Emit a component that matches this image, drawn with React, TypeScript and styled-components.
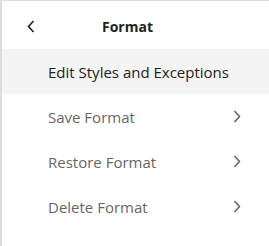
import * as React from "react";
import styled, { createGlobalStyle } from "styled-components";

const GlobalStyle = createGlobalStyle`
  html, body {
    margin: 0;
    padding: 0;
    background: #ffffff;
  }
  body {
    font-family: "Open Sans", "Noto Sans", sans-serif;
  }
`;

const items = [
  { label: "Edit Styles and Exceptions", active: true, sub: false },
  { label: "Save Format", active: false, sub: true },
  { label: "Restore Format", active: false, sub: true },
  { label: "Delete Format", active: false, sub: true },
];

const Chevron = ({ dir, color }: { dir: "left" | "right"; color: string }) => (
  <svg width="8" height="13" viewBox="0 0 8 13">
    <path
      d={dir === "left" ? "M6.5 1 L1.5 6.5 L6.5 12" : "M1.5 1 L6.5 6.5 L1.5 12"}
      fill="none"
      stroke={color}
      strokeWidth="1.6"
    />
  </svg>
);

const App = () => {
  return (
    <>
      <GlobalStyle />
      <Panel>
        <Header>
          <BackButton>
            <Chevron dir="left" color="#222" />
          </BackButton>
          <Title>Format</Title>
        </Header>
        <Menu>
          {items.map((it) => (
            <Item key={it.label} active={it.active}>
              <Label active={it.active}>{it.label}</Label>
              {it.sub && (
                <Arrow>
                  <Chevron dir="right" color="#666" />
                </Arrow>
              )}
            </Item>
          ))}
        </Menu>
      </Panel>
    </>
  );
};

const Panel = styled.div`
  width: 267px;
  height: 245px;
  border-left: 2px solid #dcdcdc;
  border-top: 1px solid #dcdcdc;
  background: #fff;
`;
const Header = styled.div`
  height: 48px;
  display: flex;
  align-items: center;
`;
const BackButton = styled.div`
  width: 8px;
  margin-left: 25px;
  display: flex;
  align-items: center;
  padding-top: 2px;
`;
const Title = styled.div`
  margin-left: 67px;
  font-size: 14px;
  font-weight: 700;
  color: #222;
  padding-top: 2px;
`;
const Menu = styled.div`
  display: flex;
  flex-direction: column;
`;
const Item = styled.div<{ active: boolean }>`
  height: 45px;
  display: flex;
  align-items: center;
  padding-left: 46px;
  padding-right: 28px;
  background: ${(p) => (p.active ? "#f4f4f4" : "transparent")};
`;
const Label = styled.span<{ active: boolean }>`
  flex: 1;
  font-size: 15px;
  color: ${(p) => (p.active ? "#222" : "#666")};
`;
const Arrow = styled.span`
  display: flex;
  align-items: center;
`;

export default App;
